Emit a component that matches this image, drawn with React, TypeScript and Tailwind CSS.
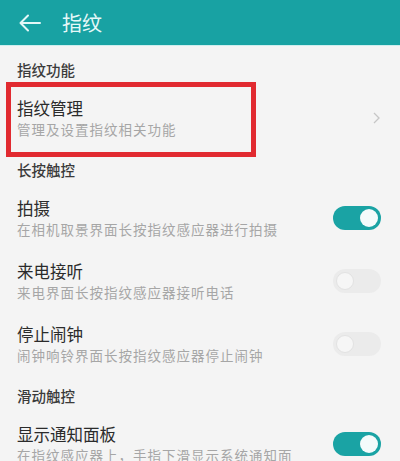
const font = {
  fontFamily: '"Noto Sans CJK SC", "Noto Sans", sans-serif',
};

function Toggle({ on }: { on: boolean }) {
  return on ? (
    <div className="flex h-[24px] w-[48px] items-center justify-end rounded-full bg-[#1aa3a4] px-[3px]">
      <div className="h-[18px] w-[18px] rounded-full bg-[#f4fbfb]" />
    </div>
  ) : (
    <div className="flex h-[24px] w-[48px] items-center justify-start rounded-full bg-[#ebebeb] px-[3px]">
      <div className="h-[18px] w-[18px] rounded-full border border-[#e2e2e2] bg-[#f6f6f6]" />
    </div>
  );
}

function SectionHeader({ label, first = false }: { label: string; first?: boolean }) {
  return (
    <div
      className={`pl-[17px] pb-[6px] text-[14.5px] leading-[20px] font-medium text-[#3b3b3b] ${
        first ? "pt-[14px]" : "pt-[11px]"
      }`}
    >
      {label}
    </div>
  );
}

function Row({
  title,
  desc,
  right,
  marked = false,
}: {
  title: string;
  desc: string;
  right: React.ReactNode;
  marked?: boolean;
}) {
  return (
    <div className="relative flex h-[63px] items-center justify-between pl-[17px] pr-[19px]">
      <div className="flex flex-col">
        <span className="text-[16.5px] leading-[22px] text-[#2b2b2b]">{title}</span>
        <span className="text-[13.5px] leading-[20px] tracking-[1px] text-[#a6a6a6]">{desc}</span>
      </div>
      {right}
      {marked && (
        <div className="absolute -top-[4px] left-[6px] h-[75px] w-[250px] border-[5px] border-[#e12a30]" />
      )}
    </div>
  );
}

export default function App() {
  return (
    <div className="h-[461px] w-[400px] overflow-hidden bg-[#f4f4f4]" style={font}>
      {/* toolbar */}
      <div className="flex h-[45px] items-center bg-[#18a2a3]">
        <svg className="ml-[19px]" width="22" height="18" viewBox="0 0 22 18" fill="none">
          <path
            d="M21 9H2M9 1.5L1.5 9L9 16.5"
            stroke="#e4f7f7"
            strokeWidth="2"
            strokeLinecap="round"
            strokeLinejoin="round"
          />
        </svg>
        <span className="ml-[21px] text-[20px] text-[#e6f8f8]">指纹</span>
      </div>
      <div className="h-px bg-[#cdeeee]" />

      <SectionHeader label="指纹功能" first />
      <Row
        title="指纹管理"
        desc="管理及设置指纹相关功能"
        marked
        right={
          <svg className="mr-[1px]" width="7" height="12" viewBox="0 0 7 12" fill="none">
            <path d="M1 1l5 5-5 5" stroke="#c6c6c6" strokeWidth="1.3" />
          </svg>
        }
      />

      <SectionHeader label="长按触控" />
      <Row title="拍摄" desc="在相机取景界面长按指纹感应器进行拍摄" right={<Toggle on />} />
      <Row title="来电接听" desc="来电界面长按指纹感应器接听电话" right={<Toggle on={false} />} />
      <Row title="停止闹钟" desc="闹钟响铃界面长按指纹感应器停止闹钟" right={<Toggle on={false} />} />

      <SectionHeader label="滑动触控" />
      <Row title="显示通知面板" desc="在指纹感应器上，手指下滑显示系统通知面" right={<Toggle on />} />
    </div>
  );
}
